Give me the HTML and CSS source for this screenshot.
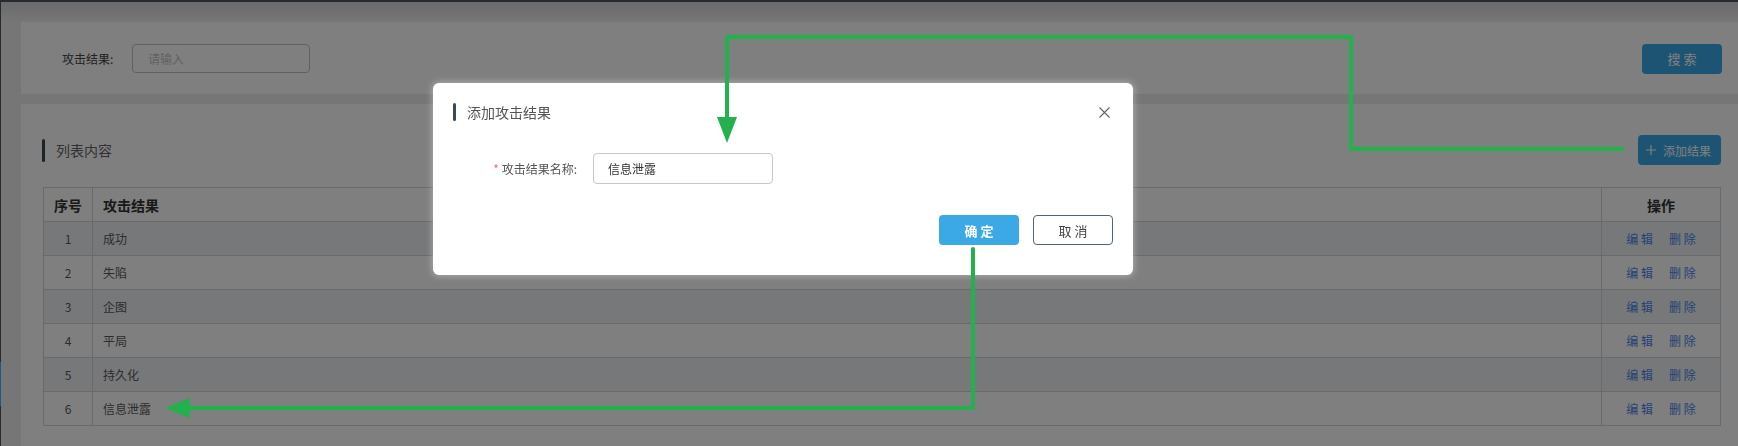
FILE: index.html
```html
<!DOCTYPE html>
<html lang="zh-CN">
<head>
<meta charset="utf-8">
<title>攻击结果</title>
<link rel="stylesheet" href="styles.css">
</head>
<body>
<div class="app">
  <div class="topbar"></div>
  <div class="main">
    <aside class="edge"><span class="edge-active"></span></aside>
    <div class="content">
      <section class="card search-card">
        <label class="search-label">攻击结果:</label>
        <div class="search-input">请输入</div>
        <div class="spacer"></div>
        <button class="btn btn-primary btn-search">搜 索</button>
      </section>
      <section class="card list-card">
        <div class="list-head">
          <div class="section-title"><span class="title-bar"></span><span>列表内容</span></div>
          <button class="btn btn-primary btn-add">
            <svg class="plus" width="10" height="10" viewBox="0 0 10 10"><path d="M5 0V10M0 5H10" stroke="currentColor" stroke-width="1.2" fill="none"/></svg>
            <span>添加结果</span>
          </button>
        </div>
        <table class="grid">
          <colgroup><col class="c-idx"><col><col class="c-op"></colgroup>
          <thead>
            <tr><th class="center">序号</th><th>攻击结果</th><th class="center">操作</th></tr>
          </thead>
          <tbody>
            <tr class="odd"><td class="center">1</td><td>成功</td><td class="center ops"><a>编 辑</a><a>删 除</a></td></tr>
            <tr><td class="center">2</td><td>失陷</td><td class="center ops"><a>编 辑</a><a>删 除</a></td></tr>
            <tr class="odd"><td class="center">3</td><td>企图</td><td class="center ops"><a>编 辑</a><a>删 除</a></td></tr>
            <tr><td class="center">4</td><td>平局</td><td class="center ops"><a>编 辑</a><a>删 除</a></td></tr>
            <tr class="odd"><td class="center">5</td><td>持久化</td><td class="center ops"><a>编 辑</a><a>删 除</a></td></tr>
            <tr><td class="center">6</td><td>信息泄露</td><td class="center ops"><a>编 辑</a><a>删 除</a></td></tr>
          </tbody>
        </table>
      </section>
    </div>
  </div>
</div>

<div class="mask"></div>

<div class="dialog">
  <div class="dialog-head">
    <div class="dialog-title"><span class="title-bar dark"></span><span>添加攻击结果</span></div>
    <svg class="close" width="11" height="11" viewBox="0 0 11 11"><path d="M0.5 0.5L10.5 10.5M10.5 0.5L0.5 10.5" stroke="#606266" stroke-width="1.1" fill="none"/></svg>
  </div>
  <div class="form-row">
    <label class="form-label"><span class="req">*</span> 攻击结果名称:</label>
    <div class="form-input">信息泄露</div>
  </div>
  <div class="dialog-foot">
    <button class="btn btn-primary btn-ok">确 定</button>
    <button class="btn btn-cancel">取 消</button>
  </div>
</div>

<svg class="annot" width="1738" height="446" viewBox="0 0 1738 446">
  <polyline points="1623,149 1351,149 1351,37 727,37 727,122" fill="none" stroke="#22b14c" stroke-width="4" stroke-linecap="round" stroke-linejoin="round"/>
  <polygon points="717,117 737,117 727,143" fill="#22b14c"/>
  <polyline points="973,249 973,408 188,408" fill="none" stroke="#22b14c" stroke-width="4" stroke-linecap="round" stroke-linejoin="round"/>
  <polygon points="190,398 190,418 165,408" fill="#22b14c"/>
</svg>
</body>
</html>
```

FILE: styles.css
```css
* { box-sizing: border-box; }

html, body {
  margin: 0;
  padding: 0;
  width: 1738px;
  height: 446px;
  overflow: hidden;
  font-family: "Noto Sans CJK SC", "Noto Sans", sans-serif;
  background: #ededed;
}

.app {
  display: flex;
  flex-direction: column;
  height: 446px;
}

.topbar {
  height: 2px;
  background: #4c5662;
  flex: none;
}

.main {
  flex: 1;
  display: flex;
  min-height: 0;
}

.edge {
  width: 1px;
  flex: none;
  background: #4c5662;
  display: flex;
  flex-direction: column;
}

.edge-active {
  display: block;
  margin-top: 360px;
  height: 44px;
  background: #3cb4f4;
}

.content {
  flex: 1;
  padding: 20px 0 0 20px;
  display: flex;
  flex-direction: column;
  gap: 10px;
  background: linear-gradient(to bottom, #d6d6d6 0px, #ededed 20px, #ededed 100%);
}

.card {
  background: #fff;
}

.search-card {
  height: 72px;
  flex: none;
  display: flex;
  align-items: center;
  padding: 0 16px 0 41px;
}

.search-label {
  font-size: 12px;
  color: #444;
  width: 70px;
}

.search-input {
  width: 178px;
  height: 29px;
  border: 1px solid #bfc3ca;
  border-radius: 4px;
  padding-left: 15px;
  font-size: 12px;
  line-height: 27px;
  color: #c4c4c4;
}

.spacer { flex: 1; }

.btn {
  font-family: inherit;
  border: none;
  border-radius: 4px;
  cursor: pointer;
  padding: 0;
  display: inline-flex;
  align-items: center;
  justify-content: center;
}

.btn-primary {
  background: #3ba9e6;
  color: #fff;
}

.btn-search {
  width: 80px;
  height: 30px;
  font-size: 13px;
  margin-top: 1px;
}

.list-card {
  flex: 1;
  padding: 31px 17px 30px 21px;
}

.list-head {
  display: flex;
  align-items: center;
  justify-content: space-between;
  height: 30px;
}

.section-title {
  display: flex;
  align-items: center;
  font-size: 14px;
  color: #666;
}

.title-bar {
  display: inline-block;
  width: 3px;
  height: 23px;
  border-radius: 2px;
  background: #3c4650;
  margin-right: 11px;
}

.btn-add {
  width: 83px;
  height: 30px;
  font-size: 12px;
  gap: 7px;
  padding-right: 2px;
}

.plus { display: block; }

.grid {
  margin-top: 22px;
  margin-left: 1px;
  width: 1678px;
  border-collapse: collapse;
  border: 1px solid #d4d4d4;
  table-layout: fixed;
}

.c-idx { width: 49px; }
.c-op { width: 119px; }

.grid th, .grid td {
  border: 1px solid #d4d4d4;
  height: 34px;
  padding: 0 0 0 10px;
  text-align: left;
  vertical-align: middle;
}

.grid th {
  font-size: 14px;
  font-weight: bold;
  color: #333;
  background: #fff;
}

.grid td {
  font-size: 12px;
  color: #5a5a5a;
}

.grid .center {
  text-align: center;
  padding: 0;
}

.grid tr.odd td { background: #eef0f4; }

.ops a {
  color: #4a84ec;
  font-size: 12px;
  margin: 0 8px;
}

/* overlay */
.mask {
  position: fixed;
  inset: 0;
  background: rgba(0, 0, 0, 0.5);
}

.dialog {
  position: fixed;
  left: 433px;
  top: 83px;
  width: 700px;
  background: #fff;
  border-radius: 6px;
  padding: 20px 20px 30px 20px;
  box-shadow: 0 0 6px 1px rgba(255, 255, 255, 0.35);
}

.dialog-head {
  height: 18px;
  display: flex;
  align-items: center;
  justify-content: space-between;
  padding-right: 3px;
}

.dialog-title {
  display: flex;
  align-items: center;
  font-size: 14px;
  color: #555;
}

.title-bar.dark {
  height: 18px;
  background: #3d4a55;
}

.close { display: block; }

.form-row {
  margin-top: 32px;
  display: flex;
  align-items: center;
}

.form-label {
  width: 124px;
  margin-right: 16px;
  text-align: right;
  font-size: 12px;
  color: #555;
}

.req { color: #f56c6c; }

.form-input {
  width: 180px;
  height: 31px;
  border: 1px solid #c8c8c8;
  border-radius: 4px;
  padding-left: 14px;
  font-size: 12px;
  line-height: 29px;
  color: #333;
}

.dialog-foot {
  margin-top: 31px;
  display: flex;
  justify-content: flex-end;
  gap: 14px;
}

.btn-ok {
  width: 80px;
  height: 30px;
  font-size: 13px;
  font-weight: bold;
}

.btn-cancel {
  width: 80px;
  height: 30px;
  font-size: 13px;
  background: #fff;
  color: #444;
  border: 1px solid #4e6478;
}

.annot {
  position: fixed;
  left: 0;
  top: 0;
  pointer-events: none;
}
```
